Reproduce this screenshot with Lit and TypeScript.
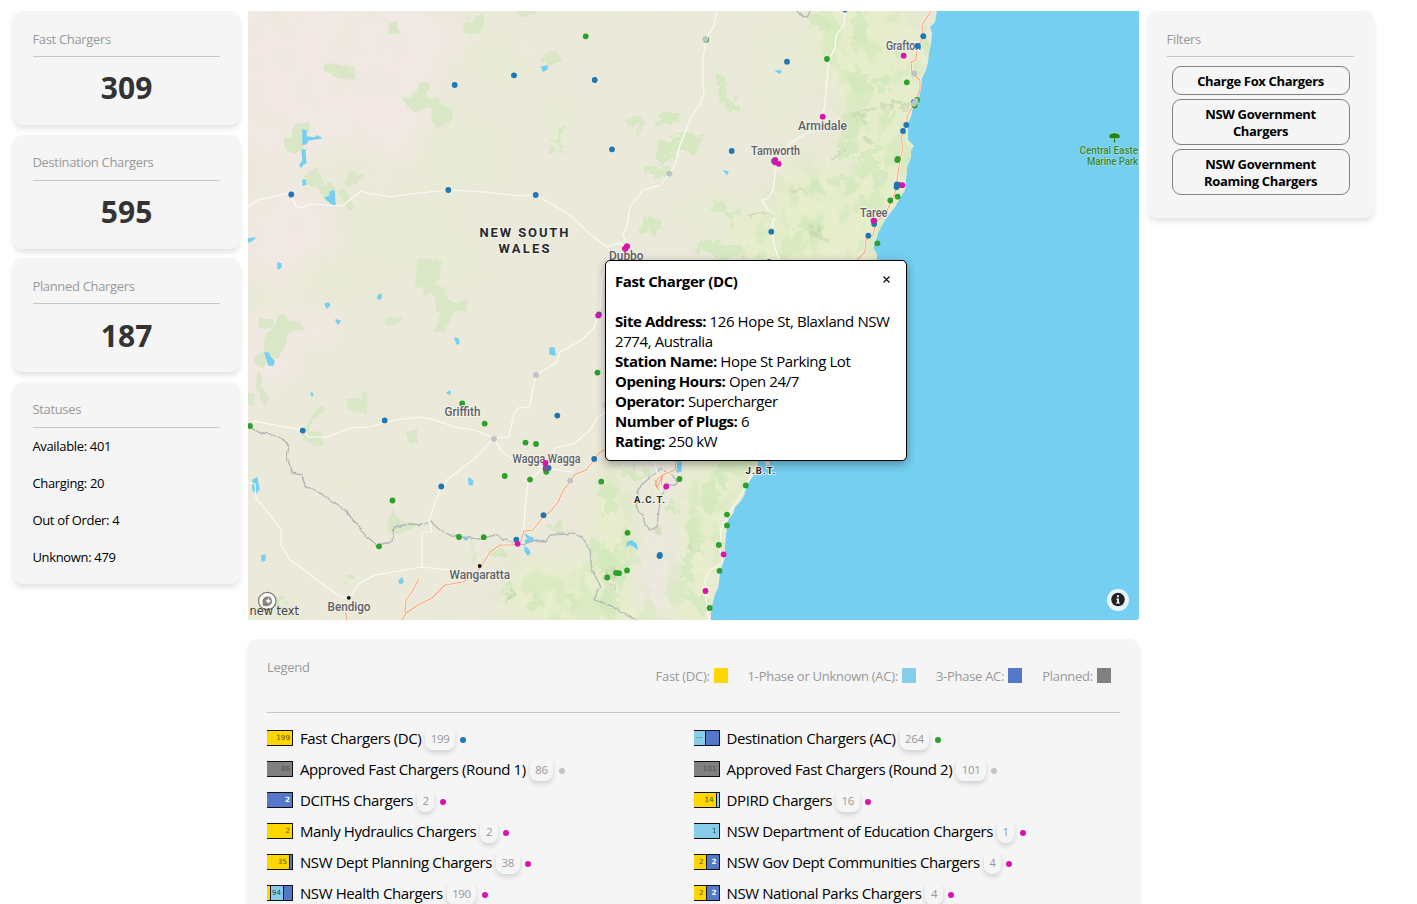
import { LitElement, html, svg, css } from "lit";
import { customElement, property } from "lit/decorators.js";

const WATER = "#75cff0";
const BLUE = "#1f77b4";
const GREEN = "#2ca02c";
const PINK = "#d912b0";
const GRAY = "#bfc2c5";

/* Deterministic irregular outline used for forests and ranges. */
function patch(cx: number, cy: number, rx: number, ry: number, seed: number): string {
  let s = seed * 9301 + 49297;
  const n = Math.max(12, Math.round((rx + ry) * 0.8));
  const pts: string[] = [];
  for (let i = 0; i < n; i++) {
    s = (s * 9301 + 49297) % 233280;
    const k = 0.55 + 0.5 * (s / 233280);
    const a = (i / n) * Math.PI * 2;
    pts.push((cx + Math.cos(a) * rx * k).toFixed(1) + "," + (cy + Math.sin(a) * ry * k).toFixed(1));
  }
  return pts.join(" ");
}

const COAST =
  "937,11 935,22 930,27 932,33 931,44 929,52 928,62 926,70 922,78 921,88 919,97 916,103 913,107 911,116 908,123 908,140 914,146 911,150 911,157 907,167 906,180 905,190 900,198 895,207 890,213 885,220 881,227 878,233 875,242 873,248 877,254 877,262 860,290 830,350 800,410 770,450 758,461 755,473 751,479 747,485 744,496 740,502 735,507 733,514 728,520 726,535 725,545 725,558 722,565 720,572 719,582 718,588 715,594 713,602 711,610 711,620";

const PINKISH: number[][] = [
  [290, 60, 105, 130, 1], [380, 110, 70, 90, 2], [290, 240, 55, 70, 3], [400, 40, 60, 60, 4],
  [480, 105, 10, 9, 5], [420, 125, 8, 22, 6], [320, 330, 30, 22, 7], [270, 350, 30, 60, 8], [455, 45, 16, 14, 9], [525, 50, 14, 16, 10],
];
const WASH: number[][] = [
  [400, 230, 70, 50, 11], [460, 150, 60, 50, 12], [500, 60, 40, 30, 13], [330, 280, 50, 25, 14],
  [560, 120, 20, 40, 15], [450, 260, 50, 30, 16], [780, 80, 30, 80, 17], [720, 215, 50, 30, 18],
  [360, 160, 40, 15, 19], [255, 300, 30, 20, 20],
];
const RANGE: number[][] = [
  [880, 90, 60, 130, 21], [860, 220, 70, 60, 22], [820, 210, 60, 55, 23], [840, 40, 40, 50, 24],
  [620, 590, 60, 60, 25], [707, 520, 30, 90, 26], [740, 470, 40, 40, 27], [550, 595, 60, 45, 28],
  [900, 150, 30, 100, 29], [690, 600, 35, 40, 30], [790, 240, 70, 45, 31], [610, 520, 25, 60, 32],
];
const FOREST: number[][] = [
  [858, 30, 11, 25, 41], [860, 80, 13, 18, 42], [885, 80, 9, 12, 43], [850, 125, 18, 14, 44], [845, 150, 12, 16, 45],
  [868, 160, 14, 18, 46], [888, 120, 7, 14, 47], [840, 178, 10, 10, 48], [853, 185, 8, 9, 49], [812, 228, 16, 14, 50],
  [815, 190, 12, 8, 51], [722, 90, 9, 18, 52], [730, 105, 8, 10, 53], [720, 208, 13, 7, 54], [731, 216, 8, 6, 55],
  [820, 22, 13, 8, 56], [708, 246, 14, 7, 57], [730, 252, 20, 8, 58], [650, 227, 12, 12, 59], [637, 122, 12, 9, 60],
  [668, 118, 14, 8, 61], [688, 141, 15, 12, 62], [668, 149, 12, 18, 63], [657, 173, 15, 8, 64], [558, 137, 4, 9, 65],
  [556, 150, 4, 5, 66], [552, 58, 9, 6, 67], [635, 475, 14, 10, 68], [610, 497, 10, 18, 69], [624, 540, 10, 11, 70],
  [606, 565, 14, 17, 71], [610, 600, 12, 16, 72], [622, 575, 10, 13, 73], [693, 530, 9, 26, 74], [690, 565, 10, 24, 75],
  [709, 500, 8, 20, 76], [721, 475, 9, 19, 77], [700, 602, 9, 12, 78], [733, 466, 16, 7, 79], [672, 510, 7, 8, 80],
  [688, 595, 8, 8, 81], [556, 528, 14, 5, 82], [510, 592, 6, 10, 83], [534, 607, 10, 7, 84], [572, 600, 6, 14, 85],
  [500, 555, 12, 5, 87], [352, 580, 7, 6, 89], [473, 559, 6, 6, 90],
  [472, 550, 3, 9, 91], [281, 601, 5, 7, 92], [596, 545, 7, 7, 93], [880, 180, 8, 14, 94], [866, 205, 9, 7, 95], [924, 42, 4, 16, 96],
];
const SHADE: number[][] = [
  [815, 232, 8, 10, 101], [860, 118, 7, 5, 102], [610, 578, 5, 10, 103], [510, 594, 4, 7, 105],
  [838, 155, 4, 7, 106], [693, 545, 3, 9, 107], [870, 140, 6, 4, 108], [800, 190, 10, 3, 109], [762, 215, 20, 2.5, 110], [657, 530, 3, 10, 111],
  [895, 106, 20, 3, 112], [868, 110, 12, 4, 113],
];

const PARKS = [
  "324,64 332,64 339,65 355,68 354,79 337,78 331,72 324,71",
  "390,23 396,22 397,31 400,32 399,35 395,33 389,33",
  "465,24 474,22 477,16 483,14 484,22 482,31 471,33 464,32",
  "515,11 536,11 535,16 531,13 523,17 518,14",
  "284,139 292,138 293,127 299,124 309,122 309,132 303,140 303,148 297,153 289,151 284,146",
  "305,177 311,172 315,168 318,170 324,183 317,187 309,186",
  "318,187 326,185 330,182 336,190 335,206 326,200",
  "345,184 348,175 352,172 359,175 364,174 357,182 349,185",
  "338,191 343,189 351,200 353,211 347,208",
  "403,98 410,100 413,95 411,92 416,92 420,82 429,83 430,88 424,95 428,100 437,97 442,106 452,108 452,117 449,122 437,128 431,118 434,110 428,106 415,112 408,107",
  "418,260 430,259 441,261 439,280 433,284 444,288 447,300 454,303 466,300 467,311 436,310 437,299 431,292 424,295 423,287 416,286",
  "259,319 273,320 272,328 259,328", "265,336 274,327 280,315 286,316 288,321 300,322 303,329 287,332 286,344 280,356 270,360 262,367 255,364 255,357 264,352",
  "258,371 262,377 260,386 268,395 267,405 262,403 260,392 256,388", "248,394 254,393 254,404 248,405",
  "347,399 362,399 363,391 367,393 366,415 361,412 348,409",
  "385,321 392,318 402,319 398,323 390,325 385,324", "441,310 455,310 449,321 443,332 433,331 438,324",
  "407,432 417,430 417,444 408,441",
  "303,431 311,419 317,409 325,406 324,411 312,420 308,432 322,432 322,446 314,446 303,438",
  "389,517 394,506 394,514 402,521 420,525 400,533 388,532",
  "550,52 555,50 562,61 549,61", "541,60 548,52 548,62",
];

const LAKES = [
  "303,130 306,131 306,137 315,138 317,136 321,138 314,139 308,140 306,144 303,144",
  "302,150 305,150 305,155 306,163 303,164 301,167 300,165 303,160", "303,180 305,180 306,184 303,185",
  "325,198 330,196 330,192 334,191 335,205 332,204",
  "248,239 255,238 251,241 248,242",
  "278,263 281,264 281,267 278,269", "325,304 328,303 330,305 327,308", "378,296 381,294 381,298 378,299",
  "336,320 340,321 338,324", "455,338 458,339 459,343 457,344", "550,348 554,348 555,355 550,354",
  "265,353 268,353 270,357 274,361 273,365 269,365", "311,393 313,394 312,396", "447,393 450,391 450,394",
  "253,480 257,478 258,484 259,489 256,493 253,490", "469,478 473,481 472,485 469,484",
  "262,556 265,555 265,560 262,561", "399,581 402,578 403,582 400,584",
  "525,534 529,537 533,538 533,541 527,543 525,541 528,539", "525,547 528,549 530,553 528,555 525,551",
  "542,67 547,66 547,69 543,71", "776,71 781,71 780,73", "724,171 728,172 727,174",
  "627,546 628,542 632,541 636,544 637,549 634,546 630,544", "677,462 681,462 681,471 677,472", "462,537 468,538 466,540",
];

const ROADS = [
  "248,207 258,200 272,197 290,193 296,206 301,208 312,204 342,206 361,191 370,194 380,195 390,197 410,194 448,190 485,192 520,196 536,195 553,205 570,215 591,235 607,247 620,243 627,247",
  "717,11 714,26 706,38 703,60 703,85 704,93 700,105 691,117 680,145 675,165 669,174 661,185 643,190 630,207 627,225 623,235 628,247",
  "845,11 844,25 836,36 835,48 829,60 827,80 826,90 824,110 818,128 800,137 790,143 777,160 773,190 769,198 762,200 768,210 775,215 772,225 774,245 780,262",
  "598,315 594,328 582,340 560,352 557,362 536,375 529,408 520,407 514,413 509,437 494,438 475,430 455,427 435,420 420,417 395,420 370,427 350,428 328,437 308,437 303,430 285,427 253,421",
  "494,438 475,458 460,470 447,480 440,490 429,520 432,532 422,532 422,567 375,575 360,583 349,598 340,597 300,567 290,560 281,545 281,530 270,515 256,498 255,484 248,482",
  "494,438 502,452 514,460 545,468 572,472", "608,410 598,417 590,430 575,443 555,448 550,462",
  "543,468 528,482 525,510 523,540", "421,567 450,570 480,580",
  "608,258 602,280 600,312", "758,463 745,488 738,500 728,515 721,530 720,550 723,563 710,570 705,580 706,600 709,620", "654,462 659,480",
];
const MOTORWAYS = [
  "931,11 922,25 923,37 917,50 916,60 911,62 912,73 920,80 920,90 917,97 914,104 907,117 907,125 901,137 903,147 900,160 897,180 896,190 892,200 885,215 876,222 873,235 866,240 865,252 857,260",
  "608,447 598,454 594,460 586,470 574,475 570,482 564,489 558,502 550,512 544,516 533,530 524,531 521,541 513,545 500,545 490,552 482,565 476,573 463,582 445,585 432,598 418,605 406,613 402,620",
  "419,579 413,590 406,600 405,612", "345,610 347,620",
  "676,461 675,470 665,474 658,478 655,485 659,490", "655,480 657,488 663,474 661,485",
];
const BORDERS = [
  "248,425 257,432 270,434 283,439 289,446 287,457 292,473 302,475 305,486 315,490 330,500 345,510 356,523 365,535 377,545 392,542 394,527 410,524 422,525 431,522 440,530 450,535 464,537 480,539 495,535 513,543 523,545 535,540 546,541 550,535 565,534 575,533 585,541 590,550 592,570 600,585 594,600 610,605",
  "660,469 671,474 678,482 675,485 666,485 660,500 657,527 650,530 645,525 643,515 637,510 638,490 645,482 652,476 660,469",
  "600,601 638,620", "797,11 802,17 807,16 811,11",
];

const MARKERS: [number, number, string][] = [
  [291.3, 194.5, BLUE], [454.7, 85, BLUE], [514, 75.3, BLUE], [448.3, 190, BLUE], [535.7, 195, BLUE],
  [585.7, 36.3, GREEN], [706.2, 39.7, GREEN], [705.5, 39, GRAY], [594.7, 80, BLUE], [612, 149.3, BLUE], [731.7, 151, BLUE],
  [787, 61.7, BLUE], [827, 59, GREEN], [822.7, 116.7, PINK], [774, 161, BLUE], [775.3, 160, PINK], [775.2, 162.3, PINK],
  [778.7, 163.8, PINK], [669.3, 173.7, GRAY], [771.3, 231.7, BLUE], [627, 246.3, PINK], [625.2, 248.7, PINK],
  [769, 262, BLUE], [845, 9.5, BLUE],
  [923.3, 36.2, BLUE], [917.7, 46, BLUE], [903.7, 55.7, PINK], [914.2, 73.5, GRAY], [906.8, 82.3, GREEN],
  [914, 102, BLUE], [917, 100, GREEN], [914.6, 105.6, GREEN], [915.5, 100.8, GRAY], [913.8, 103.8, GRAY],
  [906.3, 125, BLUE], [903, 131, BLUE], [897.8, 159, GREEN], [897.3, 160, GREEN], [896.8, 184.3, BLUE], [896.6, 187, BLUE],
  [899, 185, BLUE], [902.3, 185.2, PINK], [897.7, 196.7, GREEN], [890.3, 200.5, GREEN], [874.3, 221, GREEN], [874.2, 224, BLUE],
  [873.7, 220.6, PINK], [868.3, 235.7, BLUE], [877.4, 243.3, GREEN],
  [599, 314.5, BLUE], [598.2, 315.4, PINK], [536, 375, GRAY], [597.5, 372.6, GREEN], [462.2, 403.4, GREEN], [484.7, 423.6, GREEN],
  [557.3, 415.6, BLUE], [384.7, 420.4, BLUE], [302.7, 430.6, BLUE], [250, 426, GREEN], [494, 438.8, GRAY],
  [525.5, 442.6, GREEN], [536, 444, GREEN], [594.2, 458.9, BLUE], [545.4, 463, PINK], [545.5, 469, GREEN], [546.3, 471.8, GREEN],
  [548.6, 468, BLUE], [545.7, 468, "#8c4a8e"], [504.7, 476, GREEN], [530, 479.6, GREEN], [570.2, 480.6, GRAY], [601.3, 481.7, GREEN],
  [441.3, 486.5, BLUE], [392.5, 500.5, GREEN], [543.5, 515.2, BLUE], [379, 546.3, GREEN], [459, 537, GREEN], [483.7, 537.2, GREEN],
  [516.3, 539.7, BLUE], [517.6, 543.8, PINK], [606.5, 405, GRAY],
  [679.5, 479, GREEN], [666.2, 486.5, PINK], [745.8, 485.4, GREEN], [727, 514.6, GREEN], [727, 525.4, GREEN],
  [627.5, 532.8, GREEN], [718.8, 545, GREEN], [723.6, 554.4, PINK], [659.9, 555, BLUE], [659.5, 556, BLUE],
  [719.5, 570.8, GREEN], [705.5, 591, PINK], [709.6, 608, GREEN], [607.2, 577.5, GREEN], [616, 572.8, GREEN], [619, 573.2, GREEN],
  [627, 570.4, GREEN],
];

const TOWNS: [string, number, number, number][] = [
  ["Grafton", 886, 50, 35], ["Armidale", 798, 129.5, 49], ["Tamworth", 751, 155, 49], ["Dubbo", 609, 260, 34.5],
  ["Taree", 860, 216.5, 27.5], ["Griffith", 444.5, 416, 36], ["Wagga Wagga", 512.5, 463, 68], ["Wangaratta", 449.5, 579, 60.5],
  ["Bendigo", 327.5, 611, 43],
];

@customElement("nsw-map")
class NswMap extends LitElement {
  static styles = css`
    :host { display: block; position: relative; width: 891px; height: 609px; }
    .canvas { display: block; width: 891px; height: 609px; border-radius: 0 0 3px 3px; }
    .label { font-family: Roboto, sans-serif; font-size: 12.8px; font-weight: 500; fill: #5f6267; stroke: #f3f2ea; stroke-width: 2px; paint-order: stroke; }
    .region { font-family: Roboto, sans-serif; font-weight: 700; fill: #27292d; stroke: #f3f2ea; stroke-width: 2px; paint-order: stroke; }
    .state { font-size: 13px; }
    .territory { font-size: 9.5px; }
    .marine { font-family: Roboto, sans-serif; font-weight: 500; font-size: 10.6px; fill: #31872f; stroke: #a9dfe9; stroke-width: 1px; paint-order: stroke; }
    .note { font-family: "DejaVu Sans", sans-serif; font-size: 11.5px; fill: #444; }
  `;
  render() {
    const polys = (list: number[][], fill: string, o: number) =>
      svg`<g fill=${fill} opacity=${o}>${list.map((p) => svg`<polygon points=${patch(p[0], p[1], p[2], p[3], p[4])}></polygon>`)}</g>`;
    const lines = (list: string[], color: string, w: number) =>
      svg`<g fill="none" stroke=${color} stroke-width=${w} stroke-linejoin="round" stroke-linecap="round">${list.map((p) => svg`<polyline points=${p}></polyline>`)}</g>`;
    const dots = (list: [number, number, string][]) => svg`<g>${list.map((m) => svg`<circle cx=${m[0]} cy=${m[1]} r="2.9" fill=${m[2]}></circle>`)}</g>`;
    return html`
      <svg class="canvas" viewBox="248 11 891 609">
        <defs>
          <filter id="soft" filterUnits="userSpaceOnUse" x="200" y="-30" width="980" height="700" color-interpolation-filters="sRGB"><feGaussianBlur stdDeviation="10"></feGaussianBlur></filter>
          <filter id="rough" filterUnits="userSpaceOnUse" x="248" y="11" width="891" height="609" color-interpolation-filters="sRGB">
            <feTurbulence type="fractalNoise" baseFrequency="0.09" numOctaves="3" seed="4" result="n"></feTurbulence>
            <feDisplacementMap in="SourceGraphic" in2="n" scale="22" xChannelSelector="R" yChannelSelector="G"></feDisplacementMap>
            <feGaussianBlur stdDeviation="0.4"></feGaussianBlur>
          </filter>
          <filter id="jag" filterUnits="userSpaceOnUse" x="248" y="11" width="891" height="609" color-interpolation-filters="sRGB">
            <feTurbulence type="fractalNoise" baseFrequency="0.2" numOctaves="2" seed="9" result="n"></feTurbulence>
            <feDisplacementMap in="SourceGraphic" in2="n" scale="4" xChannelSelector="R" yChannelSelector="G"></feDisplacementMap>
          </filter>
          <filter id="wiggle" filterUnits="userSpaceOnUse" x="248" y="11" width="891" height="609" color-interpolation-filters="sRGB">
            <feTurbulence type="fractalNoise" baseFrequency="0.2" numOctaves="1" seed="2" result="n"></feTurbulence>
            <feDisplacementMap in="SourceGraphic" in2="n" scale="4" xChannelSelector="R" yChannelSelector="G"></feDisplacementMap>
          </filter>
          <filter id="woods" filterUnits="userSpaceOnUse" x="248" y="11" width="891" height="609" color-interpolation-filters="sRGB">
            <feTurbulence type="fractalNoise" baseFrequency="0.045 0.035" numOctaves="4" seed="12"></feTurbulence>
            <feColorMatrix values="0 0 0 0 0.82  0 0 0 0 0.91  0 0 0 0 0.73  9 0 0 0 -4.7"></feColorMatrix>
          </filter>
          <filter id="plains" filterUnits="userSpaceOnUse" x="248" y="11" width="891" height="609" color-interpolation-filters="sRGB">
            <feTurbulence type="fractalNoise" baseFrequency="0.03" numOctaves="3" seed="7"></feTurbulence>
            <feColorMatrix values="0 0 0 0 0.905  0 0 0 0 0.93  0 0 0 0 0.83  8 0 0 0 -4.5"></feColorMatrix>
          </filter>
          <mask id="hills" maskUnits="userSpaceOnUse" x="248" y="11" width="891" height="609"><g filter="url(#soft)">${polys(RANGE, "#fff", 1)}</g></mask>
          <clipPath id="land"><polygon points=${"248,11 " + COAST + " 248,620"}></polygon></clipPath>
        </defs>
        <rect x="248" y="11" width="891" height="609" fill=${WATER}></rect>
        <g clip-path="url(#land)">
          <rect x="248" y="11" width="891" height="609" fill="#ebe9da"></rect>
          <g filter="url(#soft)">
            ${polys(PINKISH, "#f1e8e3", 1)} ${polys(WASH, "#e8ebd4", 0.8)} ${polys(RANGE, "#e6edcb", 1)}
            <ellipse cx="658" cy="570" rx="25" ry="50" fill="#ece8de"></ellipse>
          </g>
          <rect x="248" y="11" width="891" height="609" filter="url(#plains)" opacity="0.2"></rect>
          <g mask="url(#hills)"><rect x="248" y="11" width="891" height="609" filter="url(#woods)" opacity="0.6"></rect></g>
          <g filter="url(#rough)">${polys(FOREST, "#d3e8bc", 0.85)} ${polys(SHADE, "#bfd0a4", 0.5)}</g>
          <g filter="url(#jag)" fill="#dae7c7" stroke="#cfe4bd" stroke-width="0.5">${PARKS.map((p) => svg`<polygon points=${p}></polygon>`)}</g>
          <g fill=${WATER} stroke=${WATER} stroke-width="1.4" stroke-linejoin="round">${LAKES.map((p) => svg`<polygon points=${p}></polygon>`)}</g>
          <g filter="url(#wiggle)">${lines(BORDERS, "#b2b7b7", 1.3)}</g>
          ${lines(ROADS, "#fafaf5", 1.2)}
          ${lines(MOTORWAYS, "#fbf3e6", 2.6)} ${lines(MOTORWAYS, "#f4a77e", 1.1)}
        </g>
        <path d="M759 461h9l-3 4 3 5-6 2-5-4z" fill=${WATER}></path>
        <path d="M765 461h5l-1 4h-3z" fill="#f3d9c4"></path>
        ${dots(MARKERS)}
        <circle cx="479.7" cy="566" r="1.9" fill="#111"></circle>
        <circle cx="348.8" cy="597.8" r="1.9" fill="#111"></circle>
        ${TOWNS.map((t) => svg`<text class="label" x=${t[1]} y=${t[2]} textLength=${t[3]} lengthAdjust="spacingAndGlyphs">${t[0]}</text>`)}
        ${dots([[917.7, 46, BLUE], [545.4, 463, PINK], [627, 246.3, PINK], [625.2, 248.7, PINK], [873.7, 220.6, PINK]])}
        <text class="region state" x="479.500" y="237" textLength="89">NEW SOUTH</text>
        <text class="region state" x="498.500" y="253" textLength="51">WALES</text>
        <text class="region territory" x="634" y="503" textLength="31">A.C.T.</text>
        <text class="region territory" x="745.5" y="474" textLength="30">J.B.T.</text>
        <path d="M1112 133.300q2.500-1.300 5 0 3.500.9 3.200 3.500-.3 2.300-3 2l-1.800-.5.5 4.700h-2.800l.5-4.700-1.800.5q-2.700.3-3-2-.3-2.600 3.200-3.500z" fill="#20860f" stroke="#c2e8e4" stroke-width="0.600"></path>
        <text class="marine" x="1079.500" y="154" textLength="58.500" lengthAdjust="spacingAndGlyphs">Central Easte</text>
        <text class="marine" x="1087" y="165" textLength="51" lengthAdjust="spacingAndGlyphs">Marine Park</text>
        <circle cx="267.300" cy="601" r="8.700" fill="#fff" stroke="#77776f" stroke-width="1.200"></circle>
        <path d="M263 605.800c-.9-3.300-.7-6.300 1-8 2-1.800 5-1.700 6.800.1s1.800 4.700 0 6.500-4.600 2.100-7.800 1.400z" fill="#85837a"></path>
        <path d="M268.300 597.800l1 2.100 2.100 1-2.100 1-1 2.100-1-2.100-2.100-1 2.100-1z" fill="#fff"></path>
        <text class="note" x="249.500" y="614.700" textLength="49.500" lengthAdjust="spacingAndGlyphs">new text</text>
        <circle cx="1118" cy="600" r="11" fill="#e9f4f8"></circle>
        <circle cx="1118" cy="599.500" r="6.800" fill="#222"></circle>
        <path d="M1116.300 598.500h2.600v4h1v1h-3.800v-1h1v-3h-.8zM1117 595.300h1.900v1.900h-1.900z" fill="#fff"></path>
      </svg>
      <slot></slot>
    `;
  }
}

@customElement("charger-card")
class ChargerCard extends LitElement {
  @property() heading = "";
  static styles = css`
    :host { display: block; box-sizing: border-box; padding: 18.600px 19.500px 0; background: #f5f5f5; border-radius: 9px; box-shadow: 0 4px 6px -1px rgba(0, 0, 0, 0.13); }
    .title { height: 26.400px; border-bottom: 1px solid #c8c8c8; color: #999; font-size: 13px; line-height: 19px; letter-spacing: -0.33px; text-indent: -0.500px; }
  `;
  render() {
    return html`<div class="title">${this.heading}</div><slot></slot>`;
  }
}

@customElement("legend-card")
class LegendCard extends LitElement {
  static styles = css`
    :host { display: block; box-sizing: border-box; height: 300px; padding: 19px 19.500px 0 19px; background: #f5f5f5; border-radius: 9px; box-shadow: 0 4px 6px -1px rgba(0, 0, 0, 0.13); }
  `;
  render() {
    return html`<slot></slot>`;
  }
}

type Seg = [string, number, string];
interface Entry { name: string; count: string; dot: string; segs: Seg[]; }
const Y = "#ffd700", S = "#87ceeb", B = "#5477c8", G = "#808080";
const ENTRIES: Entry[] = [
  { name: "Fast Chargers (DC)", count: "199", dot: BLUE, segs: [[Y, 26, "199"]] },
  { name: "Destination Chargers (AC)", count: "264", dot: GREEN, segs: [[S, 12, "···"], [B, 14, ""]] },
  { name: "Approved Fast Chargers (Round 1)", count: "86", dot: "#c4c4c4", segs: [[G, 26, "86"]] },
  { name: "Approved Fast Chargers (Round 2)", count: "101", dot: "#c4c4c4", segs: [[G, 26, "101"]] },
  { name: "DCITHS Chargers", count: "2", dot: PINK, segs: [[B, 26, "2"]] },
  { name: "DPIRD Chargers", count: "16", dot: PINK, segs: [[Y, 23, "14"], [S, 3, ""]] },
  { name: "Manly Hydraulics Chargers", count: "2", dot: PINK, segs: [[Y, 26, "2"]] },
  { name: "NSW Department of Education Chargers", count: "1", dot: PINK, segs: [[S, 26, "1"]] },
  { name: "NSW Dept Planning Chargers", count: "38", dot: PINK, segs: [[Y, 24, "35"], [B, 2, ""]] },
  { name: "NSW Gov Dept Communities Chargers", count: "4", dot: PINK, segs: [[Y, 13, "2"], [B, 13, "2"]] },
  { name: "NSW Health Chargers", count: "190", dot: PINK, segs: [[Y, 4, ""], [S, 13, "94"], [B, 9, ""]] },
  { name: "NSW National Parks Chargers", count: "4", dot: PINK, segs: [[Y, 13, "2"], [B, 13, "2"]] },
];

@customElement("app-root")
class AppRoot extends LitElement {
  static styles = css`
    :host { display: block; box-sizing: border-box; height: 904px; overflow: hidden; padding: 11px 0 0 13.400px; background: #fff; font-family: "Open Sans", "Noto Sans", sans-serif; color: #000; }
    .page { display: grid; grid-template-columns: 226.400px 891.400px 226px; column-gap: 8.200px; align-items: start; }
    .side { display: flex; flex-direction: column; gap: 9.600px; }
    .stat { height: 114px; }
    .value { margin-top: 10.400px; text-align: center; font-size: 30px; line-height: 42px; font-weight: 700; color: #333; }
    .statuses { height: 202px; }
    .status { font-size: 13px; line-height: 18px; height: 37px; letter-spacing: -0.33px; text-indent: -0.500px; }
    .status:first-of-type { margin-top: 9.600px; }
    .main { display: flex; flex-direction: column; gap: 19px; }
    .filters { height: 207px; }
    .buttons { display: flex; flex-direction: column; gap: 4px; padding: 9px 4.500px 0; }
    .button { font: 700 13px/17px "Open Sans", sans-serif; letter-spacing: -0.33px; color: #000; background: transparent; border: 1px solid #808080; border-radius: 9px; padding: 6px 20px 4px; height: 46px; }
    .single { height: 29px; padding: 6px 0 4px; }
    .popup { position: absolute; left: 357px; top: 249px; box-sizing: border-box; width: 302px; height: 201px; padding: 10px 9px; background: #fff; border: 1px solid #000; border-radius: 5px; box-shadow: 0 3px 10px rgba(0, 0, 0, 0.35); font-size: 15px; line-height: 20px; letter-spacing: -0.4px; white-space: nowrap; }
    .popup-head { display: flex; justify-content: space-between; margin-bottom: 20px; }
    .close { width: 7px; height: 7px; margin: 5px 7px 0 0; }
    .legend-head { display: flex; justify-content: space-between; height: 54px; border-bottom: 1px solid #c8c8c8; font-size: 13px; line-height: 18px; color: #999; letter-spacing: -0.28px; }
    .keys { display: flex; gap: 20px; padding: 9px 9px 0 0; }
    .key { display: flex; gap: 4px; }
    .swatch { width: 14px; height: 15px; margin-top: 1px; }
    .gold { background: #ffd700; } .sky { background: #87ceeb; } .royal { background: #5477c8; } .grey { background: #808080; }
    .rows { display: grid; grid-template-columns: 426.600px 1fr; grid-auto-rows: 31px; padding-top: 9px; }
    .row { display: flex; align-items: center; height: 31px; }
    .bar { display: flex; width: 26px; height: 16px; margin-right: 7px; }
    .seg { box-sizing: border-box; border: solid #111; border-width: 1px 1px 1px 0; display: flex; align-items: center; justify-content: flex-end; padding-right: 2px; overflow: hidden; font: 7.200px/14px "DejaVu Sans", sans-serif; color: rgba(0, 0, 0, 0.7); }
    .light { color: #fff; font-weight: 700; }
    .dim { color: #505050; }
    .name { font-size: 15px; line-height: 20px; letter-spacing: -0.4px; }
    .badge { margin-left: 4px; padding: 0 5.500px; height: 24px; border-radius: 8px; box-shadow: 0 3px 5px rgba(0, 0, 0, 0.14); background: #f5f5f5; font-size: 11.500px; line-height: 26px; letter-spacing: -0.35px; color: #999; }
    .dot { width: 6px; height: 6px; margin: 5px 0 0 5.500px; border-radius: 50%; }
  `;

  render() {
    return html`
      <div class="page">
        <div class="side">
          ${[["Fast Chargers", "309"], ["Destination Chargers", "595"], ["Planned Chargers", "187"]].map(
            ([h, v]) => html`<charger-card class="stat" .heading=${h}><div class="value">${v}</div></charger-card>`)}
          <charger-card class="statuses" .heading=${"Statuses"}>
            ${["Available: 401", "Charging: 20", "Out of Order: 4", "Unknown: 479"].map((s) => html`<div class="status">${s}</div>`)}
          </charger-card>
        </div>
        <div class="main">
          <nsw-map>
            <div class="popup">
              <div class="popup-head">
                <b>Fast Charger (DC)</b>
                <svg class="close" viewBox="0 0 7 7"><path d="M.5.500l6 6M6.500.500l-6 6" stroke="#000" stroke-width="1.100"></path></svg>
              </div>
              <div><b>Site Address:</b> 126 Hope St, Blaxland NSW<br />2774, Australia</div>
              <div><b>Station Name:</b> Hope St Parking Lot</div>
              <div><b>Opening Hours:</b> Open 24/7</div>
              <div><b>Operator:</b> Supercharger</div>
              <div><b>Number of Plugs:</b> 6</div>
              <div><b>Rating:</b> 250 kW</div>
            </div>
          </nsw-map>
          <legend-card>${this.legend()}</legend-card>
        </div>
        <charger-card class="filters" .heading=${"Filters"}>
          <div class="buttons">
            <button class="button single">Charge Fox Chargers</button>
            <button class="button">NSW Government Chargers</button>
            <button class="button">NSW Government Roaming Chargers</button>
          </div>
        </charger-card>
      </div>
    `;
  }

  legend() {
    return html`
      <div class="legend-head">
        <span>Legend</span>
        <div class="keys">
          <span class="key">Fast (DC): <i class="swatch gold"></i></span>
          <span class="key">1-Phase or Unknown (AC): <i class="swatch sky"></i></span>
          <span class="key">3-Phase AC: <i class="swatch royal"></i></span>
          <span class="key">Planned: <i class="swatch grey"></i></span>
        </div>
      </div>
      <div class="rows">
        ${ENTRIES.map((e) => html`
          <div class="row">
            <div class="bar">${e.segs.map((s) => html`<span class="seg ${s[0] === B ? "light" : s[0] === G ? "dim" : ""}" style="width:${s[1]}px;background:${s[0]}">${s[2]}</span>`)}</div>
            <span class="name">${e.name}</span>
            <span class="badge">${e.count}</span>
            <span class="dot" style="background:${e.dot}"></span>
          </div>`)}
      </div>
    `;
  }
}
